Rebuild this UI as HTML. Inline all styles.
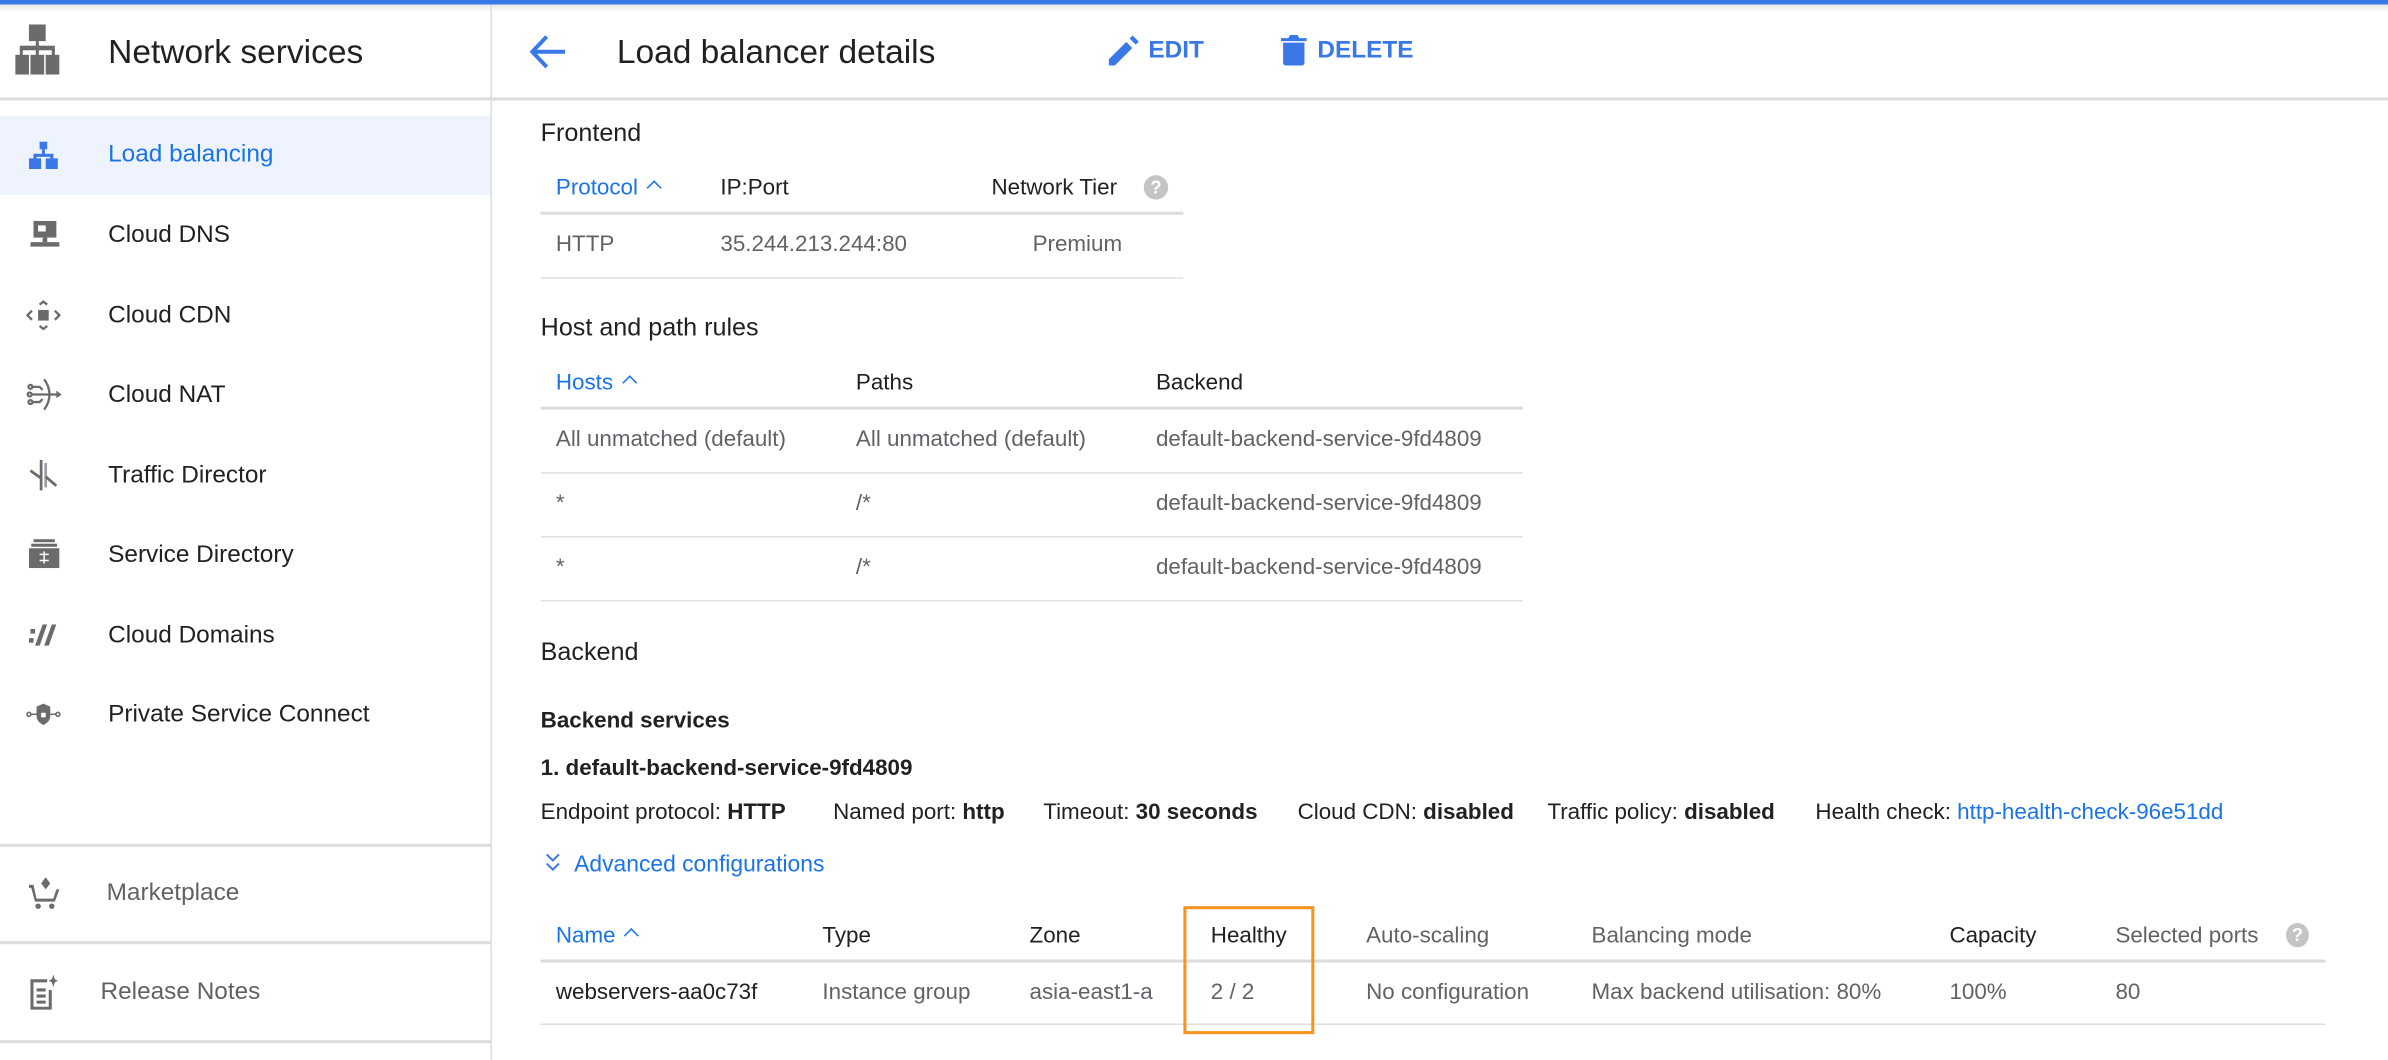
<!DOCTYPE html>
<html><head><meta charset="utf-8"><style>
html,body{margin:0;padding:0;background:#fff;overflow:hidden;width:2388px;height:1060px}
#w{position:absolute;left:0;top:0;width:1568px;height:696px;transform:scale(1.523);transform-origin:0 0;font-family:"Liberation Sans",Arial,sans-serif;color:#202124}
.a{position:absolute;white-space:nowrap}
.t{transform:translateY(-45%)}
.nav{font-size:16px;color:#202124}
.h{font-size:16.5px}
.th{font-size:14.7px;color:#202124}
.td{font-size:14.7px;color:#5f6368}
.blue{color:#1a73e8}
.line{position:absolute;height:1px;background:#e0e0e0}
.line2{position:absolute;height:2px;background:#dadce0}
b{font-weight:bold;color:#202124}
svg{position:absolute}
.chev{display:inline-block;width:6px;height:6px;border-left:1.5px solid #1a73e8;border-top:1.5px solid #1a73e8;transform:rotate(45deg);margin-left:7px;position:relative;top:-1px}
</style></head><body><div id="w">
<div class="a" style="left:0;top:0;width:1568px;height:3px;background:#3b78e7"></div>
<div class="a" style="left:0;top:3px;width:1568px;height:5px;background:linear-gradient(#e6e6e6,#fff)"></div>
<div class="a" style="left:322px;top:3px;width:1px;height:693px;background:#dadce0"></div>
<div class="line2" style="left:0;top:64px;width:1568px"></div>

<svg style="left:10px;top:16px" width="29" height="33" viewBox="0 0 29 33"><g fill="#6b6b6b"><rect x="9" y="0" width="11" height="11"/><rect x="13.5" y="11" width="2" height="4"/><rect x="3" y="14" width="23" height="3"/><rect x="3" y="16" width="2" height="5"/><rect x="13.5" y="16" width="2" height="5"/><rect x="24" y="16" width="2" height="5"/><rect x="0" y="20" width="9" height="13"/><rect x="10" y="20" width="9" height="13"/><rect x="20" y="20" width="9" height="13"/></g></svg>
<div class="a t" style="left:71px;top:33px;font-size:22px">Network services</div>

<div class="a" style="left:0;top:76px;width:322px;height:52px;background:#eef3fd"></div>
<svg style="left:19px;top:93px" width="19" height="18" viewBox="0 0 19 18"><g fill="#3b78e7"><rect x="7" y="0" width="5" height="5"/><rect x="8.5" y="5" width="2" height="4"/><rect x="3" y="8" width="13" height="2"/><rect x="3" y="8" width="2" height="4"/><rect x="14" y="8" width="2" height="4"/><rect x="0" y="11" width="8" height="7"/><rect x="11" y="11" width="8" height="7"/></g></svg>
<div class="a t nav" style="left:71px;top:101px;color:#1a73e8">Load balancing</div>

<svg style="left:20px;top:145px" width="19" height="17" viewBox="0 0 19 17"><g fill="#6b6b6b"><rect x="2" y="0" width="15" height="11"/><rect x="8" y="11" width="3" height="3"/><rect x="0" y="14" width="19" height="3"/></g><rect x="5" y="3" width="5" height="4" fill="#fff"/></svg>
<div class="a t nav" style="left:71px;top:154px">Cloud DNS</div>
<svg style="left:17px;top:197px" width="23" height="20" viewBox="0 0 23 20"><g fill="none" stroke="#6b6b6b" stroke-width="1.5"><path d="M9 3 L11.5 1 L14 3"/><path d="M9 17 L11.5 19 L14 17"/><path d="M4 7 L1 10 L4 13"/><path d="M19 7 L22 10 L19 13"/></g><rect x="8" y="6.5" width="7" height="7" fill="#6b6b6b"/></svg>
<div class="a t nav" style="left:71px;top:207px">Cloud CDN</div>
<svg style="left:17px;top:248px" width="24" height="22" viewBox="0 0 24 22"><g fill="none" stroke="#6b6b6b" stroke-width="1.5"><path d="M12 1 Q19 11 12 21"/><path d="M3 11 H22"/><path d="M4 6 H9 L11 8"/><path d="M4 16 H9 L11 14"/><circle cx="3" cy="6" r="1.3"/><circle cx="2.5" cy="11" r="1.3"/><circle cx="3" cy="16" r="1.3"/></g><path d="M20 8.5 L23.5 11 L20 13.5Z" fill="#6b6b6b"/></svg>
<div class="a t nav" style="left:71px;top:259px">Cloud NAT</div>
<svg style="left:19px;top:301px" width="20" height="22" viewBox="0 0 20 22"><g fill="none" stroke="#6b6b6b" stroke-width="1.8"><path d="M8 1 V21"/><path d="M11 3 V19" stroke="#9aa0a6"/><path d="M1 8 L8 13"/><path d="M11 12 L18 18"/></g></svg>
<div class="a t nav" style="left:71px;top:312px">Traffic Director</div>
<svg style="left:19px;top:354px" width="20" height="19" viewBox="0 0 20 19"><g fill="#6b6b6b"><rect x="3" y="0" width="14" height="2"/><rect x="1.5" y="3" width="17" height="2"/><path d="M0 6 H20 V19 H0Z"/></g><path d="M7 10 H13 M7 14 H13 M10 8 V16" stroke="#fff" stroke-width="1"/></svg>
<div class="a t nav" style="left:71px;top:364px">Service Directory</div>
<svg style="left:19px;top:410px" width="20" height="14" viewBox="0 0 20 14"><g fill="#6b6b6b"><rect x="1" y="3" width="3" height="3"/><rect x="0" y="9" width="3" height="3"/><path d="M9 0 H12 L7 14 H4Z"/><path d="M15 0 H18 L13 14 H10Z"/></g></svg>
<div class="a t nav" style="left:71px;top:417px">Cloud Domains</div>
<svg style="left:17px;top:461px" width="23" height="16" viewBox="0 0 23 16"><g fill="none" stroke="#6b6b6b" stroke-width="1"><circle cx="2" cy="8" r="1.3"/><circle cx="21" cy="8" r="1.3"/><path d="M3.3 8 H7 M16 8 H19.7"/></g><path d="M11.5 1 L16 3 V9 Q16 13 11.5 15 Q7 13 7 9 V3Z" fill="#6b6b6b"/><rect x="10" y="7" width="3" height="3" fill="#fff"/></svg>
<div class="a t nav" style="left:71px;top:469px">Private Service Connect</div>

<div class="line2" style="left:0;top:554px;width:322px"></div>
<svg style="left:19px;top:576px" width="20" height="22" viewBox="0 0 20 22"><g fill="#6b6b6b"><path d="M11 0 L14 4 L11 8 L8 4Z"/><path d="M0 5 H3 L5 14 H16 L18 8 H20 L17 16 H4 L1.5 7 H0Z"/><circle cx="6" cy="19" r="1.8"/><circle cx="15" cy="19" r="1.8"/></g></svg>
<div class="a t nav" style="left:70px;top:586px;color:#5f6368">Marketplace</div>
<div class="line2" style="left:0;top:618px;width:322px"></div>
<svg style="left:19px;top:640px" width="19" height="23" viewBox="0 0 19 23"><g fill="none" stroke="#6b6b6b" stroke-width="2"><path d="M12 4 H2 V22 H14 V10"/><path d="M5 10 H11 M5 14 H11 M5 18 H11"/></g><path d="M16 0 L17 3 L19 4 L17 5 L16 8 L15 5 L13 4 L15 3Z" fill="#6b6b6b"/></svg>
<div class="a t nav" style="left:66px;top:651px;color:#5f6368">Release Notes</div>
<div class="line2" style="left:0;top:683px;width:322px"></div>

<svg style="left:347px;top:22px" width="26" height="24" viewBox="0 0 26 24"><path d="M24 12 H3 M12 2 L2.5 12 L12 22" fill="none" stroke="#3b78e7" stroke-width="2.6"/></svg>
<div class="a t" style="left:405px;top:33px;font-size:22px">Load balancer details</div>
<svg style="left:728px;top:23px" width="20" height="20" viewBox="0 0 20 20"><path d="M0 16 V20 H4 L15.5 8.5 L11.5 4.5Z M17.7 6.3 L19.7 4.3 L15.7 0.3 L13.7 2.3Z" fill="#3b78e7"/></svg>
<div class="a t" style="left:754px;top:33px;font-size:16px;font-weight:bold;color:#3b78e7">EDIT</div>
<svg style="left:841px;top:23px" width="17" height="20" viewBox="0 0 17 20"><path d="M0 2 H5 L6 0 H11 L12 2 H17 V4 H0Z M1.5 5 H15.5 V18 Q15.5 20 13.5 20 H3.5 Q1.5 20 1.5 18Z" fill="#3b78e7"/></svg>
<div class="a t" style="left:865px;top:33px;font-size:16px;font-weight:bold;color:#3b78e7">DELETE</div>

<div class="a t h" style="left:355px;top:87px">Frontend</div>
<div class="a t th blue" style="left:365px;top:123px">Protocol<span class="chev"></span></div>
<div class="a t th" style="left:473px;top:123px">IP:Port</div>
<div class="a t th" style="left:651px;top:123px">Network Tier</div>
<div class="a" style="left:751px;top:115px;width:16px;height:16px;border-radius:50%;background:#c4c4c4;color:#fff;font-size:12px;font-weight:bold;text-align:center;line-height:16px">?</div>
<div class="line2" style="left:355px;top:139px;width:422px"></div>
<div class="a t td" style="left:365px;top:160px">HTTP</div>
<div class="a t td" style="left:473px;top:160px">35.244.213.244:80</div>
<div class="a t td" style="left:678px;top:160px">Premium</div>
<div class="line" style="left:355px;top:182px;width:422px"></div>

<div class="a t h" style="left:355px;top:215px">Host and path rules</div>
<div class="a t th blue" style="left:365px;top:251px">Hosts<span class="chev"></span></div>
<div class="a t th" style="left:562px;top:251px">Paths</div>
<div class="a t th" style="left:759px;top:251px">Backend</div>
<div class="line2" style="left:355px;top:267px;width:645px"></div>
<div class="a t td" style="left:365px;top:288px">All unmatched (default)</div>
<div class="a t td" style="left:562px;top:288px">All unmatched (default)</div>
<div class="a t td" style="left:759px;top:288px">default-backend-service-9fd4809</div>
<div class="line" style="left:355px;top:310px;width:645px"></div>
<div class="a t td" style="left:365px;top:330px">*</div>
<div class="a t td" style="left:562px;top:330px">/*</div>
<div class="a t td" style="left:759px;top:330px">default-backend-service-9fd4809</div>
<div class="line" style="left:355px;top:352px;width:645px"></div>
<div class="a t td" style="left:365px;top:372px">*</div>
<div class="a t td" style="left:562px;top:372px">/*</div>
<div class="a t td" style="left:759px;top:372px">default-backend-service-9fd4809</div>
<div class="line" style="left:355px;top:394px;width:645px"></div>

<div class="a t h" style="left:355px;top:428px">Backend</div>
<div class="a t" style="left:355px;top:473px;font-size:14.7px;font-weight:bold">Backend services</div>
<div class="a t" style="left:355px;top:504px;font-size:14.7px;font-weight:bold">1. default-backend-service-9fd4809</div>
<div class="a t" style="left:355px;top:533px;font-size:14.7px">Endpoint protocol: <b>HTTP</b></div>
<div class="a t" style="left:547px;top:533px;font-size:14.7px">Named port: <b>http</b></div>
<div class="a t" style="left:685px;top:533px;font-size:14.7px">Timeout: <b>30 seconds</b></div>
<div class="a t" style="left:852px;top:533px;font-size:14.7px">Cloud CDN: <b>disabled</b></div>
<div class="a t" style="left:1016px;top:533px;font-size:14.7px">Traffic policy: <b>disabled</b></div>
<div class="a t" style="left:1192px;top:533px;font-size:14.7px">Health check: <span class="blue">http-health-check-96e51dd</span></div>
<svg style="left:358px;top:560px" width="10" height="13" viewBox="0 0 10 13"><path d="M1 1 L5 5 L9 1 M1 7 L5 11 L9 7" fill="none" stroke="#3b78e7" stroke-width="1.3"/></svg>
<div class="a t" style="left:377px;top:567px;font-size:15px;color:#1a73e8">Advanced configurations</div>

<div class="a t th blue" style="left:365px;top:614px">Name<span class="chev"></span></div>
<div class="a t th" style="left:540px;top:614px">Type</div>
<div class="a t th" style="left:676px;top:614px">Zone</div>
<div class="a t th" style="left:795px;top:614px">Healthy</div>
<div class="a t th" style="left:897px;top:614px;color:#5f6368">Auto-scaling</div>
<div class="a t th" style="left:1045px;top:614px;color:#5f6368">Balancing mode</div>
<div class="a t th" style="left:1280px;top:614px">Capacity</div>
<div class="a t th" style="left:1389px;top:614px;color:#5f6368">Selected ports</div>
<div class="a" style="left:1501px;top:606px;width:15px;height:16px;border-radius:50%;background:#c4c4c4;color:#fff;font-size:12px;font-weight:bold;text-align:center;line-height:16px">?</div>
<div class="line2" style="left:355px;top:630px;width:1172px"></div>
<div class="a t td" style="left:365px;top:651px;color:#202124">webservers-aa0c73f</div>
<div class="a t td" style="left:540px;top:651px">Instance group</div>
<div class="a t td" style="left:676px;top:651px">asia-east1-a</div>
<div class="a t td" style="left:795px;top:651px">2 / 2</div>
<div class="a t td" style="left:897px;top:651px">No configuration</div>
<div class="a t td" style="left:1045px;top:651px">Max backend utilisation: 80%</div>
<div class="a t td" style="left:1280px;top:651px">100%</div>
<div class="a t td" style="left:1389px;top:651px">80</div>
<div class="line" style="left:355px;top:672px;width:1172px"></div>
<div class="a" style="left:777px;top:595px;width:82px;height:80px;border:2px solid #f7931e"></div>
</div></body></html>
